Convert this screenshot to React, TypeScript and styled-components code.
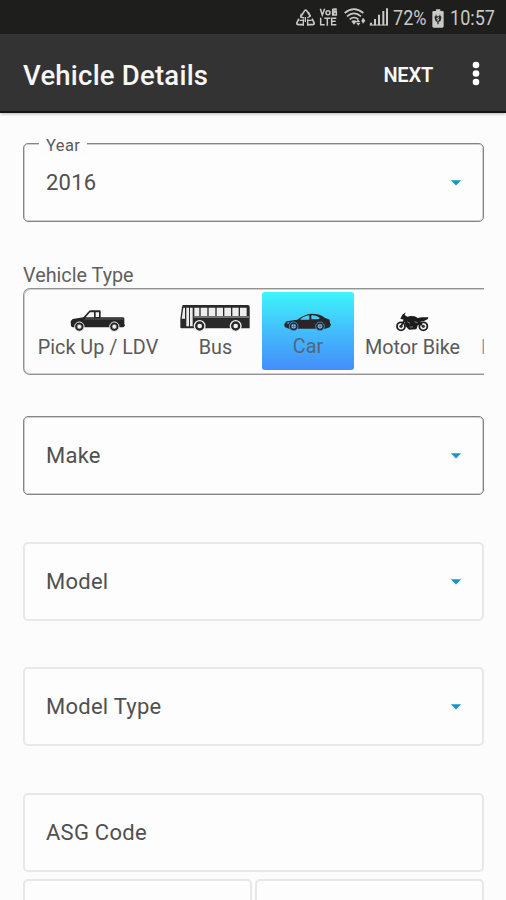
import React from "react";
import styled, { createGlobalStyle } from "styled-components";

const GlobalStyle = createGlobalStyle`
  * { box-sizing: border-box; }
  body {
    margin: 0;
    background: #fcfcfc;
    font-family: Roboto, "Liberation Sans", sans-serif;
    overflow: hidden;
  }
  svg { display: block; flex: none; }
`;

const Screen = styled.div`
  width: 506px;
  height: 900px;
  overflow: hidden;
  background: #fcfcfc;
`;

const StatusBar = styled.div`
  height: 34px;
  padding: 2px 10px 0 0;
  display: flex;
  align-items: center;
  justify-content: flex-end;
  background: #1e1e1c;
  color: #c9c9c7;
`;

const StatusIcons = styled.div`
  display: flex;
  align-items: center;
  margin-right: 5px;
`;

const StatusText = styled.span<{ $width: number }>`
  width: ${(p) => p.$width}px;
  font-size: 20.5px;
  line-height: 32px;
  white-space: nowrap;
  transform: scaleX(0.88);
  transform-origin: left center;
`;

const AppBar = styled.header`
  height: 79px;
  padding: 1px 20px 0 23px;
  display: flex;
  align-items: center;
  background: #333333;
  border-bottom: 2px solid #141414;
  box-shadow: 0 1px 3px rgba(0, 0, 0, 0.28);
  color: #f7f7f7;
`;

const Title = styled.h1`
  flex: 1;
  margin: 5px 0 0;
  font-size: 27.5px;
  font-weight: 500;
  line-height: 32px;
  letter-spacing: 0.22px;
`;

const NextButton = styled.button`
  border: 0;
  padding: 0;
  margin: 3px 33px 0 0;
  background: none;
  color: inherit;
  font: 600 20px/24px Roboto, sans-serif;
  letter-spacing: -0.2px;
`;

const Form = styled.main`
  display: flex;
  flex-direction: column;
  padding: 30px 22px 0 23px;
`;

const Field = styled.div<{ $active?: boolean; $gap: number }>`
  position: relative;
  height: 79px;
  margin-bottom: ${(p) => p.$gap}px;
  padding: ${(p) => (p.$active ? "0 21px 0 22px" : "0 20px 0 21px")};
  display: flex;
  flex: none;
  align-items: center;
  justify-content: space-between;
  border: ${(p) => (p.$active ? "1px solid #858585" : "2px solid #e8e8e8")};
  box-shadow: ${(p) => (p.$active ? "inset 0 0 0 1px #cfcfcf" : "none")};
  border-radius: 5px;
  background: #fdfdfd;
`;

const FieldText = styled.span`
  font-size: 22px;
  line-height: 28px;
  letter-spacing: 0.25px;
  color: #505050;
`;

const FloatingLabel = styled.span`
  position: absolute;
  left: 15px;
  top: -9px;
  padding: 0 7px;
  background: #fcfcfc;
  font-size: 16.5px;
  line-height: 22px;
  letter-spacing: 0.4px;
  color: #5a5a5a;
`;

const SectionLabel = styled.label`
  height: 24px;
  font-size: 19.8px;
  line-height: 24px;
  color: #606060;
`;

const TypeStrip = styled.div`
  height: 87px;
  margin-bottom: 41px;
  padding: 3px 0 3px 3px;
  display: flex;
  flex: none;
  overflow: hidden;
  border: 1px solid #929292;
  border-right: 0;
  border-radius: 7px 0 0 7px;
  box-shadow: inset 1px 1px 0 #cfcfcf, inset 0 -1px 0 #cfcfcf;
`;

const TypeItem = styled.div<{ $width: number; $selected?: boolean }>`
  flex: none;
  width: ${(p) => p.$width}px;
  height: 78px;
  display: flex;
  flex-direction: column;
  align-items: center;
  border-radius: 3px;
  color: ${(p) => (p.$selected ? "#54677a" : "#5a5a5a")};
  background: ${(p) =>
    p.$selected ? "linear-gradient(#3cf6fa, #43bdfc 50%, #448dfb)" : "none"};
`;

const IconSlot = styled.div<{ $selected?: boolean }>`
  height: ${(p) => (p.$selected ? 39 : 40)}px;
  margin-right: 1px;
  display: flex;
  align-items: flex-end;
`;

const TypeName = styled.span`
  margin-top: 4px;
  font-size: 19.8px;
  line-height: 24px;
  white-space: nowrap;
`;

const SplitRow = styled.div`
  display: grid;
  grid-template-columns: 229px 229px;
  gap: 3px;
`;

const Arrow = () => (
  <svg width="12" height="6" viewBox="0 0 12 6">
    <path d="M0.8 0.2H11.2L6 5.6Z" fill="#1c95c4" />
  </svg>
);

const PickupIcon = () => (
  <svg width="55" height="23" viewBox="0 0 165 69">
    <path
      fill="#252525"
      d="M3 52L2 37L8 30L40 25L55 8Q58 4 64 4H89Q92 4 92 8V25H160L163 28V44L165 50L160 55H8Z"
    />
    <path fill="#f4f4f4" d="M47 25L60 10H72V25ZM77 10H87V24H77Z" />
    <path stroke="#777" strokeWidth="2" d="M44 30H160" />
    <g fill="#222" stroke="#f2f2f2" strokeWidth="3">
      <circle cx="28" cy="53" r="14" />
      <circle cx="133" cy="53" r="14" />
    </g>
    <g fill="#eee" stroke="#555" strokeWidth="2">
      <circle cx="28" cy="53" r="7" />
      <circle cx="133" cy="53" r="7" />
    </g>
  </svg>
);

const BusIcon = () => (
  <svg width="70" height="28" viewBox="0 0 210 84">
    <path fill="#292929" d="M10 3H203Q209 3 209 9V73H4Q1 73 1 68V45L6 8Q7 3 10 3Z" />
    <path
      fill="#ededed"
      d="M10 11H15V44H5ZM19 11H27V67H19ZM30 11H38V67H30ZM43 11H58V36H43ZM62 11H82V36H62ZM86 11H106V36H86ZM110 11H129V36H110ZM133 11H153V36H133ZM157 11H176V36H157ZM180 11H200V36H180Z"
    />
    <path stroke="#bbb" strokeWidth="3" d="M41 39H207" />
    <g fill="#292929" stroke="#f3f3f3" strokeWidth="4">
      <circle cx="59" cy="66" r="16" />
      <circle cx="167" cy="66" r="16" />
    </g>
    <g fill="#f0f0f0">
      <circle cx="59" cy="66" r="7" />
      <circle cx="167" cy="66" r="7" />
    </g>
  </svg>
);

const CarIcon = () => (
  <svg width="47" height="18" viewBox="0 0 141 54">
    <path
      fill="#2b2528"
      d="M2 42L1 32L8 25L40 20Q62 3 83 2Q109 2 122 14L137 20L138 30L141 35L137 43L124 47H15Z"
    />
    <path fill="#52c8f3" d="M48 20Q61 8 76 7V20ZM82 7Q98 6 108 15L103 19H82ZM6 30L18 27L13 32Z" />
    <g fill="#242832" stroke="#439fd9" strokeWidth="2.5">
      <circle cx="29" cy="40" r="13" />
      <circle cx="108" cy="40" r="13" />
    </g>
    <g fill="#8bc2e8">
      <circle cx="29" cy="40" r="7" />
      <circle cx="108" cy="40" r="7" />
    </g>
    <path
      stroke="#2b3440"
      strokeWidth="1.5"
      d="M29 33V47M22 40H36M108 33V47M101 40H115"
    />
  </svg>
);

const BikeIcon = () => (
  <svg width="33" height="20" viewBox="0 0 99 60">
    <g fill="none" stroke="#222" strokeWidth="5.5">
      <circle cx="15" cy="43" r="12" />
      <circle cx="82" cy="43" r="12" />
    </g>
    <g fill="#333">
      <circle cx="15" cy="43" r="5" />
      <circle cx="82" cy="43" r="5" />
    </g>
    <path
      fill="#1c1c1c"
      d="M13 20L19 8L29 1L26 9L34 14L44 12L56 13L65 18L77 16L97 16L96 21L84 27L73 29L80 38L76 41L66 38L61 52L39 53L29 43L26 29L17 44L13 42L23 23Z"
    />
    <path stroke="#aaa" strokeWidth="2" d="M34 29L42 34M55 29L65 32M41 45H51" />
  </svg>
);

const StatusGlyphs = () => (
  <svg width="92" height="20" viewBox="0 0 276 60" fill="none" stroke="#c9c9c7">
    <g strokeWidth="5">
      <path d="M15 25L26 8Q29 4 32 8L43 25M9 32L3 44Q1 50 8 50H22M48 32L54 44Q56 50 49 50H34" />
      <path strokeWidth="4" d="M16 17L14 27L24 30M37 12L43 24L34 30M22 34V53M35 34V53M11 37H22M35 37H47M28 27V42" />
    </g>
    <g strokeWidth="4.5">
      <path d="M73 2L79 21L86 2M110 2V23M74 29V50H86M85 31H103M94 31V53M121 31H107V50H121M107 40H119" />
      <circle cx="96" cy="14" r="6" />
      <path d="M116 3H120V11H114V3ZM115 12H121V21H113V12Z" />
    </g>
    <g strokeWidth="5">
      <path d="M146 15Q174 -8 202 15M153 25Q174 7 195 25M161 34Q174 23 187 34" />
      <path fill="#c9c9c7" stroke="none" d="M166 40Q174 34 182 40L174 50ZM186 34L193 43H179ZM181 45H193L187 53ZM201 29L208 38L201 47L196 38Z" />
    </g>
    <g strokeWidth="6">
      <path d="M225 52V44M237 52V33M249 52V20M262 52V9M273 52V1" />
      <path strokeWidth="3" d="M221 51H276" />
    </g>
  </svg>
);

const BatteryWrap = styled.div`
  margin: 0 6px 0 1px;
`;

const BatteryIcon = () => (
  <svg width="12" height="19" viewBox="0 0 36 57">
    <path fill="#c9c9c7" d="M12 1H25V6H32Q35 6 35 10V52Q35 56 31 56H5Q1 56 1 52V10Q1 6 5 6H12Z" />
    <path
      fill="#292927"
      d="M11 17H14V22H22V17H25V22H28V27Q28 36 20 39V46H16V39Q8 36 8 27V22H11Z"
    />
    <path stroke="#c9c9c7" strokeWidth="3" fill="none" d="M20 24L14 30H21L16 37" />
  </svg>
);

const MoreIcon = () => (
  <svg width="20" height="28" viewBox="0 0 20 28" fill="#fff">
    <circle cx="10" cy="6" r="3.3" />
    <circle cx="10" cy="14.5" r="3.3" />
    <circle cx="10" cy="23" r="3.3" />
  </svg>
);

const NextTypeItem = styled(TypeItem)`
  align-items: flex-start;
  padding-left: 10px;
  color: #999;
`;

const TYPES = [
  { name: "Pick Up / LDV", icon: <PickupIcon />, width: 142 },
  { name: "Bus", icon: <BusIcon />, width: 93 },
  { name: "Car", icon: <CarIcon />, width: 92, selected: true },
  { name: "Motor Bike", icon: <BikeIcon />, width: 117 },
];

export default function App() {
  return (
    <Screen>
      <GlobalStyle />
      <StatusBar>
        <StatusIcons>
          <StatusGlyphs />
        </StatusIcons>
        <StatusText $width={38}>72%</StatusText>
        <BatteryWrap>
          <BatteryIcon />
        </BatteryWrap>
        <StatusText $width={46}>10:57</StatusText>
      </StatusBar>
      <AppBar>
        <Title>Vehicle Details</Title>
        <NextButton>NEXT</NextButton>
        <MoreIcon />
      </AppBar>
      <Form>
        <Field $active $gap={42}>
          <FloatingLabel>Year</FloatingLabel>
          <FieldText>2016</FieldText>
          <Arrow />
        </Field>
        <SectionLabel>Vehicle Type</SectionLabel>
        <TypeStrip>
          {TYPES.map((t) => (
            <TypeItem key={t.name} $width={t.width} $selected={t.selected}>
              <IconSlot $selected={t.selected}>{t.icon}</IconSlot>
              <TypeName>{t.name}</TypeName>
            </TypeItem>
          ))}
          <NextTypeItem $width={24}>
            <IconSlot />
            <TypeName>L</TypeName>
          </NextTypeItem>
        </TypeStrip>
        <Field $active $gap={47}>
          <FieldText>Make</FieldText>
          <Arrow />
        </Field>
        <Field $gap={46}>
          <FieldText>Model</FieldText>
          <Arrow />
        </Field>
        <Field $gap={47}>
          <FieldText>Model Type</FieldText>
          <Arrow />
        </Field>
        <Field $gap={7}>
          <FieldText>ASG Code</FieldText>
        </Field>
        <SplitRow>
          <Field $gap={0} />
          <Field $gap={0} />
        </SplitRow>
      </Form>
    </Screen>
  );
}
